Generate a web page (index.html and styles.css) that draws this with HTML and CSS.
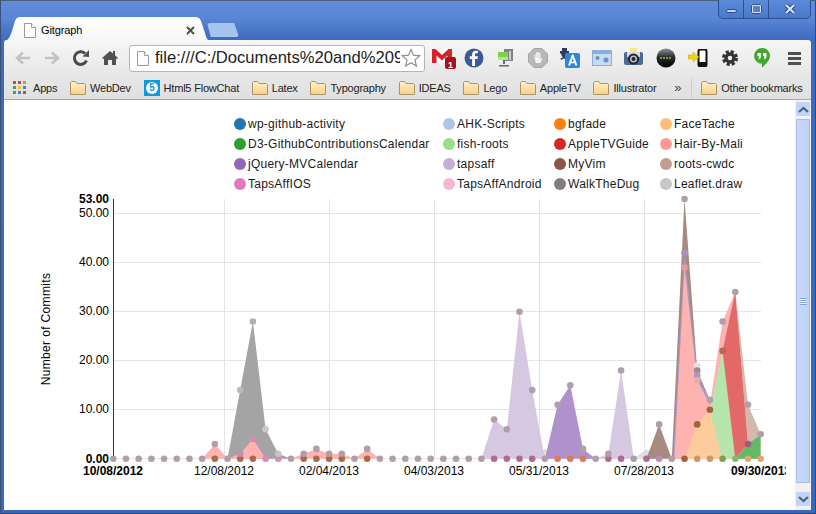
FILE: index.html
```html
<!DOCTYPE html>
<html lang="en">
<head>
<meta charset="utf-8">
<title>Gitgraph</title>
<link rel="stylesheet" href="styles.css">
</head>
<body>
<div class="window">
  <header class="titlebar">
    <div class="tab">
      <svg class="page-icon" width="12" height="15" viewBox="0 0 12 15"><path class="sheet" d="M.5.5h7l4 4v10H.5z"/><path class="sheet" d="M7.5.5v4h4"/></svg>
      <span class="tab-title">Gitgraph</span>
      <svg class="tab-close" width="9" height="9" viewBox="0 0 9 9"><path d="M1 1l7 7M8 1L1 8"/></svg>
    </div>
    <div class="new-tab"></div>
    <div class="controls">
      <div class="control"><span class="min-glyph"></span></div>
      <div class="control"><span class="max-glyph"></span></div>
      <div class="control control-close"><svg width="12" height="10" viewBox="0 0 12 10"><path class="x-out" d="M2 1l8 8M10 1L2 9"/><path class="x-in" d="M2 1l8 8M10 1L2 9"/></svg></div>
    </div>
  </header>

  <nav class="toolbar">
    <div class="nav-btn"><svg width="18" height="16" viewBox="0 0 18 16"><path class="arrow" d="M16 8H4M9 2.500L3 8l6 5.500"/></svg></div>
    <div class="nav-btn"><svg width="18" height="16" viewBox="0 0 18 16"><path class="arrow" d="M2 8h12M9 2.500L15 8l-6 5.500"/></svg></div>
    <div class="nav-btn"><svg width="18" height="18" viewBox="0 0 18 18"><path class="reload" d="M14.500 11.500A6.300 6.300 0 1 1 13 4.500"/><path class="solid" d="M10.500 7.500L17 8V1z"/></svg></div>
    <div class="nav-btn"><svg width="16" height="16" viewBox="0 0 16 16"><path class="solid" d="M0 8l8-7 3 2.600V1h2v4.300L16 8l-1 1-1-.8V15h-4v-5H6v5H2V8.200L1 9z"/></svg></div>
    <div class="address">
      <svg class="page-icon" width="12" height="15" viewBox="0 0 12 15"><path class="sheet" d="M.5.5h7l4 4v10H.5z"/><path class="sheet" d="M7.500.5v4h4"/></svg>
      <span class="url">file:///C:/Documents%20and%209</span>
      <svg class="star" width="20" height="20" viewBox="0 0 20 20"><path d="M10 1.500l2.500 5.700 6.200.6-4.700 4.100 1.400 6.100L10 14.800 4.600 18l1.400-6.100L1.300 7.800l6.200-.6z"/></svg>
    </div>
    <div class="extensions">
      <div class="ext"><svg width="26" height="24" viewBox="0 0 26 24"><rect x="0" y="3" width="20" height="14" fill="#fff"/><path d="M0 3h3.500L10 9l6.500-6H20v14h-4.500V9.500L10 14.500 4.500 9.500V17H0z" fill="#d8232a"/><rect x="13" y="11" width="11" height="12" rx="2" fill="#a01420"/><text class="badge-num" x="18.500" y="21.500">1</text></svg></div>
      <div class="ext"><svg width="20" height="20" viewBox="0 0 20 20"><circle cx="10" cy="10" r="9.500" fill="#3b5a9a"/><path d="M11 18v-7h2.500l.4-2.800H11V6.600c0-.8.300-1.300 1.400-1.300h1.500V2.900c-.3 0-1.200-.1-2.200-.1-2.200 0-3.600 1.300-3.600 3.600v1.800H5.700V11h2.400v7z" fill="#fff"/></svg></div>
      <div class="ext"><svg width="18" height="20" viewBox="0 0 18 20"><path d="M7 1h9v12H7z" fill="#7c858a"/><path d="M12 3h2v9h-2z" fill="#ccd"/><path d="M1 4h10v8H1z" fill="#7fd04f"/><path d="M1 9h10v3H1z" fill="#b4e88c"/><path d="M6 12h2v4H6zM2 17h10v1.500H2z" fill="#667"/></svg></div>
      <div class="ext"><svg width="20" height="20" viewBox="0 0 20 20"><path d="M6 .5h8L19.500 6v8L14 19.500H6L.5 14V6z" fill="#b8b8b8" stroke="#a4a4a4"/><path d="M6.500 11V6.500h1.200V10h.3V4.500h1.300V10h.3V4h1.300v6h.3V5h1.300v6.500l1-1.500 1 .5-2 4.500H8z" fill="#f2f2f2"/></svg></div>
      <div class="ext"><svg width="22" height="22" viewBox="0 0 22 22"><path d="M3 1h5v3h2v2H9c-.5 2-1.500 3.500-3 4.500.8.500 1.600.8 2.500 1L8 13c-1.200-.3-2.200-.8-3-1.400-1 .6-2 1.100-3 1.400L1.500 11.500c1-.3 1.800-.6 2.500-1C3 9.500 2.300 8 2 6.500H1V4h2z" fill="#2a3a60"/><rect x="6" y="6" width="15" height="15" rx="2" fill="#2f86d8"/><path d="M9 18.500l4-11h1.400l4 11h-2.200l-.7-2.200h-3.600l-.7 2.200zm3.500-3.800h2.400l-1.200-3.700z" fill="#fff"/></svg></div>
      <div class="ext"><svg width="20" height="16" viewBox="0 0 20 16"><rect x=".5" y=".5" width="19" height="15" fill="#c6daf2" stroke="#8cb0dc"/><rect x="1" y="1" width="18" height="3" fill="#88aedd"/><circle cx="5.500" cy="8" r="2" fill="#6a90c4"/><circle cx="14" cy="10" r="2.500" fill="#6a90c4"/></svg></div>
      <div class="ext"><svg width="20" height="20" viewBox="0 0 20 20"><path d="M6 0h7v4H6z" fill="#f6e88a"/><rect y="4" width="19" height="13" rx="2" fill="#4a6a98"/><rect x="3" y="4" width="13" height="5" fill="#d8dde4"/><circle cx="9.500" cy="11" r="5.500" fill="#22242a"/><circle cx="9.500" cy="11" r="3.500" fill="#b8c0cc"/><circle cx="9.500" cy="11" r="2" fill="#22242a"/></svg></div>
      <div class="ext"><svg width="20" height="20" viewBox="0 0 20 20"><defs><linearGradient id="ball" x1="0" y1="0" x2="0" y2="1"><stop offset="0" stop-color="#8d939a"/><stop offset=".45" stop-color="#2a2c30"/><stop offset="1" stop-color="#000"/></linearGradient></defs><circle cx="10" cy="10" r="9.500" fill="url(#ball)"/><path d="M4 10h12" stroke="#6f9f38" stroke-width="2" stroke-dasharray="2 1"/></svg></div>
      <div class="ext"><svg width="20" height="18" viewBox="0 0 20 18"><rect x="10.500" y=".5" width="8" height="17" rx="2" fill="#fff" stroke="#111" stroke-width="2"/><rect x="11" y="13" width="7" height="4" fill="#111"/><path d="M0 6h5V3l6 5-6 5v-3H0z" fill="#f2d312" stroke="#c8a80a" stroke-width=".5"/></svg></div>
      <div class="ext"><svg width="16" height="16" viewBox="0 0 16 16"><circle class="gear-teeth" cx="8" cy="8" r="6.500"/><circle class="gear-ring" cx="8" cy="8" r="4"/></svg></div>
      <div class="ext"><svg width="16" height="20" viewBox="0 0 16 20"><path d="M8 0a7.800 7.800 0 0 1 8 7.800c0 4.700-4 8-8 12v-4A7.800 7.800 0 0 1 8 0z" fill="#42a62f"/><path d="M3.500 5h3.500v3.500c0 1.500-1 2.500-2.300 3V8H3.500zM9 5h3.500v3.500c0 1.500-1 2.500-2.300 3V8H9z" fill="#fff"/></svg></div>
      <div class="ext"><span class="menu-lines"></span></div>
    </div>
  </nav>

  <nav class="bookmarks">
    <a class="bm"><span class="apps-grid"><i class="r"></i><i class="r"></i><i class="o"></i><i class="g"></i><i class="y"></i><i class="b"></i><i class="g"></i><i class="b"></i><i class="r"></i></span>Apps</a>
    <a class="bm"><svg class="folder" viewBox="0 0 16 14"><use href="#f"/></svg>WebDev</a>
    <a class="bm"><svg class="favicon" viewBox="0 0 16 16"><rect width="16" height="16" fill="#0d9bdc"/><circle cx="8" cy="8" r="6" fill="#fff"/><text class="fav-num" x="8" y="11">5</text></svg>Html5 FlowChat</a>
    <a class="bm"><svg class="folder" viewBox="0 0 16 14"><use href="#f"/></svg>Latex</a>
    <a class="bm"><svg class="folder" viewBox="0 0 16 14"><use href="#f"/></svg>Typography</a>
    <a class="bm"><svg class="folder" viewBox="0 0 16 14"><use href="#f"/></svg>IDEAS</a>
    <a class="bm"><svg class="folder" viewBox="0 0 16 14"><use href="#f"/></svg>Lego</a>
    <a class="bm"><svg class="folder" viewBox="0 0 16 14"><use href="#f"/></svg>AppleTV</a>
    <a class="bm"><svg class="folder" viewBox="0 0 16 14"><use href="#f"/></svg>Illustrator</a>
    <span class="more">»</span>
    <span class="bm-sep"></span>
    <a class="bm"><svg class="folder" viewBox="0 0 16 14"><use href="#f"/></svg>Other bookmarks</a>
  </nav>

  <div class="content">
    <main class="page">
      <ul class="legend">
        <li><i class="sw s1"></i>wp-github-activity</li>
        <li><i class="sw s2"></i>AHK-Scripts</li>
        <li><i class="sw s3"></i>bgfade</li>
        <li><i class="sw s4"></i>FaceTache</li>
        <li><i class="sw s5"></i>D3-GithubContributionsCalendar</li>
        <li><i class="sw s6"></i>fish-roots</li>
        <li><i class="sw s7"></i>AppleTVGuide</li>
        <li><i class="sw s8"></i>Hair-By-Mali</li>
        <li><i class="sw s9"></i>jQuery-MVCalendar</li>
        <li><i class="sw s10"></i>tapsaff</li>
        <li><i class="sw s11"></i>MyVim</li>
        <li><i class="sw s12"></i>roots-cwdc</li>
        <li><i class="sw s13"></i>TapsAffIOS</li>
        <li><i class="sw s14"></i>TapsAffAndroid</li>
        <li><i class="sw s15"></i>WalkTheDug</li>
        <li><i class="sw s16"></i>Leaflet.draw</li>
      </ul>
      <svg class="chart" id="chart" width="782" height="305" viewBox="4 190 782 305">
        <g id="grid"></g>
        <g id="areas"></g>
        <path class="axis" d="M113.500 199V459"/>
        <g id="dots"></g>
        <g class="ylabels">
          <text class="strong" x="109" y="203">53.00</text>
          <text x="109" y="217">50.00</text>
          <text x="109" y="266">40.00</text>
          <text x="109" y="315">30.00</text>
          <text x="109" y="364">20.00</text>
          <text x="109" y="413">10.00</text>
          <text class="strong" x="109" y="463">0.00</text>
        </g>
        <g class="xlabels">
          <text class="strong" x="113" y="475">10/08/2012</text>
          <text x="224" y="475">12/08/2012</text>
          <text x="329" y="475">02/04/2013</text>
          <text x="434" y="475">04/03/2013</text>
          <text x="539" y="475">05/31/2013</text>
          <text x="644" y="475">07/28/2013</text>
          <text class="strong" x="761" y="475">09/30/2013</text>
        </g>
        <text class="ytitle" transform="translate(50 329) rotate(-90)">Number of Commits</text>
      </svg>
    </main>
    <aside class="scrollbar">
      <div class="sb-btn"><svg width="11" height="7" viewBox="0 0 11 7"><path d="M1 6l4.500-4L10 6"/></svg></div>
      <div class="sb-thumb"><span class="grip"></span></div>
      <div class="sb-track"></div>
      <div class="sb-btn"><svg width="11" height="7" viewBox="0 0 11 7"><path d="M1 1l4.500 4L10 1"/></svg></div>
    </aside>
  </div>
</div>
<svg class="defs" width="0" height="0"><defs><linearGradient id="fg" x1="0" y1="0" x2="0" y2="1"><stop offset="0" stop-color="#fff0c8"/><stop offset="1" stop-color="#fbcf87"/></linearGradient><path id="f" d="M.5 13.500v-12l1-1h4l1.500 2h7.500l1 1v10z" fill="url(#fg)" stroke="#a89468"/></defs></svg>
<script src="chart.js"></script>
</body>
</html>
```

FILE: styles.css
```css
* { box-sizing: border-box; }
html, body { margin: 0; height: 100%; overflow: hidden; background: #3b68bd; }
body { font-family: "Liberation Sans", Arial, sans-serif; color: #000; }
.defs { position: absolute; }

.window {
  width: 816px; height: 514px; display: flex; flex-direction: column;
  padding: 0 4px 3px 3px;
  border-top: 1px solid #4d5f78;
  border-left: 1px solid #3c4f78;
  border-right: 1px solid #2f4a80;
  border-bottom: 1px solid #24427c;
  background: linear-gradient(#5f8ddb 0, #5a87d5 16px, #3d69bf 40px, #3b68bd 100%);
}

/* title bar */
.titlebar { height: 39px; flex: none; display: flex; align-items: flex-start; padding-top: 16px; position: relative; }
.tab {
  width: 208px; height: 24px; padding: 2px 0 0 20px; display: flex; align-items: center; gap: 5px;
  background: linear-gradient(#fff, #f6f6f6);
  clip-path: path("M0 24C4 24 6 20 8 14L11 4C12 1 14 0 16 0H191C194 0 196 1 197 4L201 16C202 21 204 24 208 24Z");
}
.tab-title { font-size: 11px; width: 140px; letter-spacing: -.1px; }
.page-icon { flex: none; }
.sheet { fill: #fff; stroke: #9a9a9a; }
.tab-close path { stroke: #4a4a4a; stroke-width: 1.800; fill: none; }
.new-tab {
  width: 32px; height: 14px; margin: 6px 0 0 -5px; background: #a5c5ef;
  clip-path: polygon(0 0, 75% 0, 85% 0, 100% 100%, 12% 100%);
  border-radius: 3px;
}
.controls {
  position: absolute; top: -1px; right: 0; width: 93px; height: 19px; display: flex;
  border: 1px solid #2d4f90; border-top: 0; border-radius: 0 0 5px 5px;
  background: linear-gradient(#5c8ad9, #4a78cc);
}
.control { flex: 25px 0 0; display: flex; align-items: center; justify-content: center; border-right: 1px solid #2d4f90; }
.control-close { flex: 1; border: 0; }
.min-glyph { width: 11px; height: 4px; margin-top: 4px; background: #c9d8f0; border: 1px solid #2f4d86; border-radius: 2px; }
.max-glyph { width: 11px; height: 10px; border: 2px solid #dbe6f6; outline: 1px solid #2f4d86; outline-offset: -1px; border-radius: 2px; }
.x-out { stroke: #2f4d86; stroke-width: 4; fill: none; }
.x-in { stroke: #dbe6f6; stroke-width: 2; fill: none; }

/* toolbar */
.toolbar {
  height: 36px; flex: none; display: flex; align-items: center; padding: 0 0 0 4px;
  background: linear-gradient(#f6f6f6, #e7e7e7); border-radius: 3px 3px 0 0;
}
.nav-btn { width: 29px; display: flex; justify-content: center; align-items: center; flex: none; }
.arrow { fill: none; stroke: #c0c4c8; stroke-width: 2.600; }
.reload { fill: none; stroke: #4a4a4a; stroke-width: 3; }
.solid { fill: #505050; }
.address {
  width: 296px; height: 27px; flex: none; margin-left: 5px; display: flex; align-items: center; padding-left: 7px;
  background: #fff; border: 1px solid #b4b4b4; border-radius: 3px; position: relative;
}
.url { font-size: 16.600px; margin-left: 6px; width: 245px; overflow: hidden; white-space: nowrap; color: #222; }
.star { flex: none; margin-left: 1px; }
.star path { fill: #fff; stroke: #8f8f8f; stroke-width: 1.200; }
.extensions { display: flex; flex: none; margin-left: 1px; }
.ext { width: 32px; height: 26px; display: flex; align-items: center; justify-content: center; }
.ext:first-child { padding-left: 6px; }
.badge-num { font: bold 9px "Liberation Sans", sans-serif; fill: #fff; text-anchor: middle; }
.gear-teeth { fill: none; stroke: #333; stroke-width: 3; stroke-dasharray: 3.100 2; }
.gear-ring { fill: none; stroke: #333; stroke-width: 3.500; }
.menu-lines { width: 13px; height: 13px; border-top: 3px solid #4f4f4f; border-bottom: 3px solid #4f4f4f; position: relative; }
.menu-lines::after { content: ""; position: absolute; left: 0; right: 0; top: 2px; height: 3px; background: #4f4f4f; }

/* bookmarks */
.bookmarks {
  height: 24px; flex: none; display: flex; align-items: center; padding-left: 9px; gap: 12.750px; font-size: 11px; color: #222; letter-spacing: -.2px;
  background: linear-gradient(#e7e7e7, #e0e0e0); border-bottom: 1px solid #a8a8a8;
}
.bm { display: flex; align-items: center; gap: 4px; white-space: nowrap; }
.folder { width: 16px; height: 14px; flex: none; }
.favicon { width: 16px; height: 16px; flex: none; }
.fav-num { font: bold 10px "Liberation Sans", sans-serif; fill: #0d9bdc; text-anchor: middle; }
.apps-grid { width: 13px; height: 13px; margin-right: 3px; display: grid; grid-template-columns: repeat(3, 3px); grid-auto-rows: 3px; gap: 2px; }
.apps-grid i.r { background: #d9423a; }
.apps-grid i.o { background: #ee8b2c; }
.apps-grid i.g { background: #3aa757; }
.apps-grid i.y { background: #f4c430; }
.apps-grid i.b { background: #3b82e8; }
.more { font-size: 13px; margin-left: 5px; color: #444; }
.bm-sep { width: 1px; height: 21px; margin: 0 -3.500px 0 -3px; background: #cfcfcf; }

/* content */
.content { flex: 1; min-height: 0; display: flex; background: #fff; }
.page { flex: 1; min-width: 0; overflow: hidden; }
.legend {
  list-style: none; margin: 0 0 -4px; padding: 14px 0 0 230px;
  display: grid; grid-template-columns: 209px 111px 106px auto; grid-auto-rows: 20px;
  font-size: 12px;
}
.legend li { display: flex; align-items: center; gap: 2px; white-space: nowrap; letter-spacing: .25px; color: #1a1a1a; }
.sw { width: 12px; height: 12px; border-radius: 50%; flex: none; }
.s1 { background: #1f77b4; } .s2 { background: #aec7e8; } .s3 { background: #ff7f0e; } .s4 { background: #ffbb78; }
.s5 { background: #2ca02c; } .s6 { background: #98df8a; } .s7 { background: #d62728; } .s8 { background: #ff9896; }
.s9 { background: #9467bd; } .s10 { background: #c5b0d5; } .s11 { background: #8c564b; } .s12 { background: #c49c94; }
.s13 { background: #e377c2; } .s14 { background: #f7b6d2; } .s15 { background: #7f7f7f; } .s16 { background: #c7c7c7; }

.chart { display: block; }
.chart text { font-size: 12px; font-family: "Liberation Sans", sans-serif; fill: #000; }
.chart .strong { font-weight: bold; }
.ylabels text { text-anchor: end; }
.xlabels text { text-anchor: middle; }
.chart .ytitle { text-anchor: middle; letter-spacing: .35px; }
.axis { stroke: #333; stroke-width: 1; fill: none; }
.gridline { stroke: #e5e5e5; stroke-width: 1; }

/* scrollbar */
.scrollbar { width: 16px; flex: none; display: flex; flex-direction: column; padding: 1px 0 3px; background: #f3f1ec; }
.sb-btn {
  height: 16px; flex: none; display: flex; align-items: center; justify-content: center;
  background: #c3d5f7; border: 1px solid #eef3fd; border-radius: 2px;
}
.sb-btn path { fill: none; stroke: #4d6185; stroke-width: 2.200; }
.sb-thumb {
  height: 366px; flex: none; margin-top: 1px; display: flex; align-items: center; justify-content: center;
  background: linear-gradient(90deg, #c9daf9, #bdd0f6); border: 1px solid #eef3fd; outline: 1px solid #a5bcec; outline-offset: -2px; border-radius: 2px;
}
.grip { width: 7px; height: 7px; background: repeating-linear-gradient(#8aa5de 0 1px, #eef3fd 1px 2px); }
.sb-track { flex: 1; }
```

FILE: chart.js
```js
// Draws the grid, areas and data points in page coordinates.
var NS = 'http://www.w3.org/2000/svg';
var X = function (i) { return 113.3 + 12.694 * i; };
var Y = function (v) { return 458.7 - 4.9 * v; };
function add(parent, tag, attrs) {
  var el = document.createElementNS(NS, tag);
  for (var k in attrs) el.setAttribute(k, attrs[k]);
  document.getElementById(parent).appendChild(el);
}

[50, 40, 30, 20, 10, 0].forEach(function (v) {
  var y = Math.floor(Y(v)) + 0.5;
  add('grid', 'line', { 'class': 'gridline', x1: 113, x2: 761, y1: y, y2: y });
});
[224.5, 329.5, 434.5, 539.5, 644.5].forEach(function (x) {
  add('grid', 'line', { 'class': 'gridline', x1: x, x2: x, y1: 199, y2: 459 });
});

// [colour, [[index, value], ...]] painted in order
var areas = [
  ['#dedede', [[33, 0], [34, 2], [35, 0]]],
  ['#dedede', [[41, 0], [42, 2], [43, 0]]],
  ['#a4a4a4', [[9, 0], [10, 14], [11, 28], [12, 6], [13, 1], [14, 0]]],
  ['#ffb3b1', [[7, 0], [8, 3], [9, 0], [10, 1], [11, 4], [12, 0]]],
  ['#ffb3b1', [[14, 0], [15, 1], [16, 2], [17, 1], [18, 1], [19, 0]]],
  ['#ffb3b1', [[19, 0], [20, 2], [21, 0]]],
  ['#d6c8e0', [[29, 0], [30, 8], [31, 6], [32, 30], [33, 14], [34, 0]]],
  ['#b091cc', [[34, 0], [35, 11], [36, 15], [37, 2], [38, 0]]],
  ['#d6c8e0', [[38, 0], [39, 1], [40, 18], [41, 0]]],
  ['#a88a80', [[42, 0], [43, 7], [44, 0]]],
  ['#a88a80', [[44, 0], [45, 53], [46, 18], [47, 12], [47, 10], [44.5, 0]]],
  ['#a99ad0', [[44.1, 0], [45, 42], [46, 17], [47, 12], [47, 10], [44.5, 0]]],
  ['#ffb3b1', [[44.2, 0], [45, 39], [46, 16], [47, 11], [48, 28], [49, 34], [49, 0]]],
  ['#fdcc9c', [[45, 0], [46, 7], [47, 10], [48.05, 0]]],
  ['#b5e5ac', [[47, 10], [48, 22], [49, 0], [47.95, 0]]],
  ['#d3b8ae', [[49, 34], [50, 11], [51, 5], [50, 3]]],
  ['#e36868', [[48, 22], [49, 34], [50, 3], [49, 0]]],
  ['#66b866', [[49, 0], [50, 3], [51, 5], [51, 0]]]
];
areas.forEach(function (a) {
  add('areas', 'polygon', {
    fill: a[0],
    points: a[1].map(function (p) { return X(p[0]).toFixed(1) + ',' + Y(p[1]).toFixed(1); }).join(' ')
  });
});

// Baseline markers: every date carries one; some take the colour of a non-zero series.
var base = {};
[8, 10, 11, 15, 16, 17, 18, 20].forEach(function (i) { base[i] = '#b0684a'; });
[12, 13].forEach(function (i) { base[i] = '#d68cb8'; });
[30, 31, 32, 33, 39, 40, 42].forEach(function (i) { base[i] = '#b06a92'; });
[35, 36, 37].forEach(function (i) { base[i] = '#d87c5c'; });
base[43] = '#c08ab8'; base[45] = '#a8623a'; base[46] = base[47] = '#c89a6a';
base[48] = '#7ea04a'; base[49] = '#86b868'; base[50] = base[51] = '#e0a870';
for (var i = 0; i < 52; i++) {
  add('dots', 'circle', { cx: X(i), cy: Y(0), r: 3.3, fill: base[i] || '#b09fa8' });
}

var M = '#b09fa8';
[
  [8, 3, M], [10, 14, '#bdb8ba'], [11, 28, '#b5adb0'], [12, 6, '#c9c9c9'], [13, 1, '#c4c4c4'],
  [10, 1, '#c88cb0'], [11, 4, '#d48cb4'], [15, 1, M], [16, 2, M], [17, 1, M], [18, 1, M], [20, 2, M],
  [30, 8, M], [31, 6, M], [32, 30, M], [33, 14, M], [35, 11, M], [36, 15, M], [37, 2, M],
  [39, 1, M], [40, 18, M], [43, 7, M],
  [45, 53, M], [45, 42, '#a890c0'], [45, 39, '#e89a9a'],
  [46, 19, '#e2e2e2'], [46, 18, '#a08890'], [46, 17, '#a898c8'], [46, 16, '#f0a8a8'], [46, 7, '#a8623a'],
  [47, 12, M], [47, 10, '#a8623a'], [48, 28, M], [48, 22, '#b86850'], [49, 34, M],
  [50, 11, M], [50, 3, '#98607a'], [51, 5, M]
].forEach(function (d) {
  add('dots', 'circle', { cx: X(d[0]), cy: Y(d[1]), r: 3.3, fill: d[2] });
});
```
